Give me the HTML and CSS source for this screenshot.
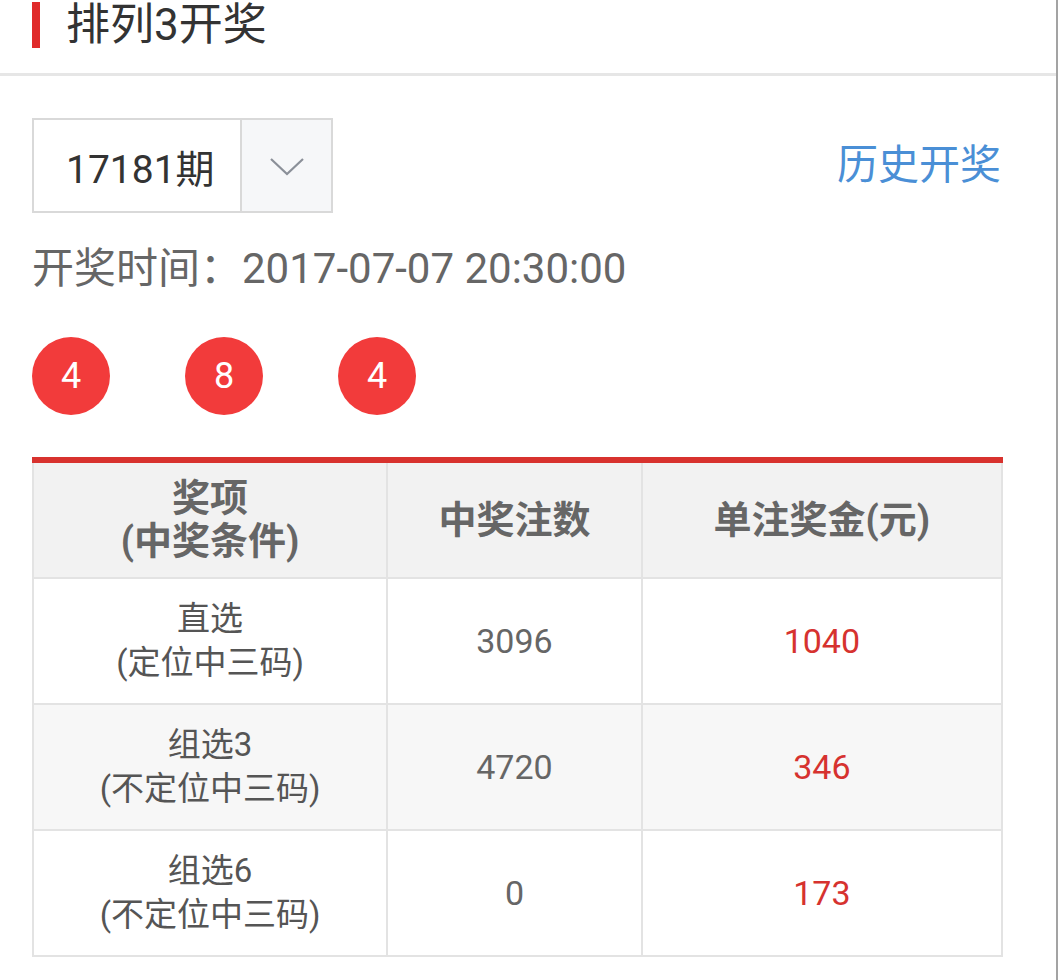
FILE: index.html
```html
<!DOCTYPE html>
<html lang="zh-CN">
<head>
  <meta charset="UTF-8">
  <meta name="viewport" content="width=device-width, initial-scale=1.0">
  <title>排列3开奖</title>
  <link rel="stylesheet" href="styles.css">
</head>
<body>
  <div class="page">
    <!-- Title -->
    <header class="page-head">
      <span class="head-bar"></span>
      <h1>排列3开奖</h1>
    </header>

    <section class="draw">
      <!-- Issue picker -->
      <div class="draw-top">
        <div class="issue-select">
          <span class="issue-value">17181期</span>
          <span class="issue-arrow">
            <svg width="36" height="20" viewBox="0 0 36 20">
              <polyline points="2,2 18,17 34,2" fill="none" stroke="#8b9099" stroke-width="2.2"/>
            </svg>
          </span>
        </div>
        <a class="history-link" href="#">历史开奖</a>
      </div>

      <p class="draw-time">开奖时间：2017-07-07 20:30:00</p>

      <!-- Winning numbers -->
      <div class="balls">
        <span class="ball">4</span>
        <span class="ball">8</span>
        <span class="ball">4</span>
      </div>

      <!-- Prize table -->
      <table class="prize-table">
        <thead>
          <tr>
            <th class="col-name">奖项<br>(中奖条件)</th>
            <th class="col-count">中奖注数</th>
            <th class="col-money">单注奖金(元)</th>
          </tr>
        </thead>
        <tbody>
          <tr>
            <td class="name">直选<br>(定位中三码)</td>
            <td class="count">3096</td>
            <td class="money">1040</td>
          </tr>
          <tr class="alt">
            <td class="name">组选3<br>(不定位中三码)</td>
            <td class="count">4720</td>
            <td class="money">346</td>
          </tr>
          <tr>
            <td class="name">组选6<br>(不定位中三码)</td>
            <td class="count">0</td>
            <td class="money">173</td>
          </tr>
        </tbody>
      </table>
    </section>
  </div>
</body>
</html>
```

FILE: styles.css
```css
/* Reset */
* {
  margin: 0;
  padding: 0;
  box-sizing: border-box;
}

:root {
  --red: #d8322e;
  --ball-red: #f23b3b;
  --blue: #4a8fd6;
  --line: #e3e3e3;
  --text: #333;
}

body {
  background-color: #fff;
  color: var(--text);
  font-family: Roboto, "Noto Sans CJK SC", sans-serif;
}

.page {
  width: 1058px;
  min-height: 100vh;
  border-right: 2px solid #a3a3a3;
}

/* Title */
.page-head {
  display: flex;
  align-items: center;
  height: 76px;
  padding: 2px 0 26px 32px;
  border-bottom: 3px solid #e6e6e6;
}

.head-bar {
  width: 8px;
  height: 46px;
  background-color: #e02a2a;
}

.page-head h1 {
  margin-left: 26px;
  font-size: 44px;
  font-weight: 400;
  line-height: 46px;
  color: var(--text);
}

/* Draw block */
.draw {
  padding: 42px 55px 0 32px;
}

.draw-top {
  display: flex;
  justify-content: space-between;
  align-items: center;
}

.issue-select {
  display: flex;
  width: 301px;
  height: 95px;
  border: 2px solid #d9d9d9;
}

.issue-value {
  flex: 1;
  display: flex;
  align-items: center;
  padding-left: 32px;
  font-size: 39px;
  color: var(--text);
}

.issue-arrow {
  width: 91px;
  display: flex;
  align-items: center;
  justify-content: center;
  border-left: 2px solid #d9d9d9;
  background-color: #f6f7f9;
  padding-top: 2px;
}

.history-link {
  margin-right: 0;
  margin-bottom: 10px;
  font-size: 41px;
  color: var(--blue);
  text-decoration: none;
}

.draw-time {
  margin-top: 30px;
  font-size: 42px;
  line-height: 52px;
  color: #666;
}

/* Balls */
.balls {
  display: flex;
  gap: 75px;
  margin-top: 42px;
}

.ball {
  width: 78px;
  height: 78px;
  border-radius: 50%;
  background-color: var(--ball-red);
  color: #fff;
  font-size: 36px;
  line-height: 78px;
  text-align: center;
}

/* Prize table */
.prize-table {
  width: 971px;
  margin-top: 42px;
  border-collapse: collapse;
  border-top: 6px solid var(--red);
  text-align: center;
}

.prize-table th,
.prize-table td {
  border: 2px solid var(--line);
  vertical-align: middle;
}

.prize-table th {
  height: 118px;
  background-color: #f2f2f2;
  color: #666;
  font-size: 38px;
  font-weight: 700;
  line-height: 43px;
}

.col-name { width: 355px; }
.col-count { width: 255px; }
.col-money { width: 361px; }

.prize-table td {
  height: 126px;
  font-size: 33px;
  line-height: 44px;
}

.prize-table tr.alt td {
  background-color: #f7f7f7;
}

.prize-table .name {
  color: #555;
}

.prize-table .count {
  color: #666;
  font-size: 34px;
}

.prize-table .money {
  color: #d6322f;
  font-size: 34px;
}
```
